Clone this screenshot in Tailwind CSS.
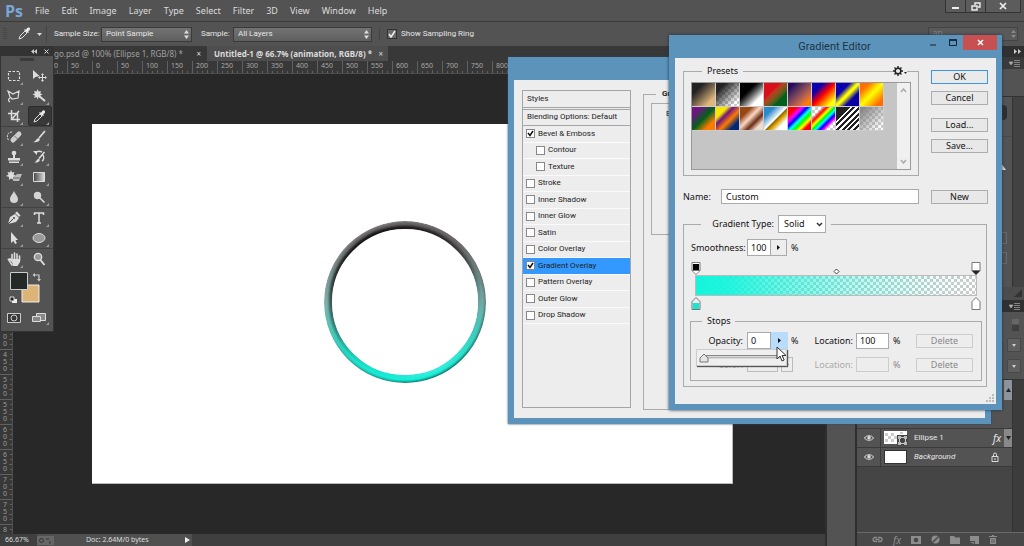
<!DOCTYPE html>
<html lang="en">
<head>
<meta charset="utf-8">
<title>Untitled-1 @ 66.7% (animation, RGB/8)</title>
<script src="https://cdn.jsdelivr.net/npm/@tailwindcss/browser@4"></script>
</head>
<body class="relative flex h-screen flex-col overflow-hidden bg-[#282828] font-['Noto_Sans','Open_Sans',sans-serif] text-[8px] leading-3 text-[#dcdcdc]">

<!-- Menu bar -->
<header class="flex h-[21px] shrink-0 items-center bg-[#535353]">
  <span class="w-[35px] pl-[5px] font-['Open_Sans',sans-serif] text-[16px] leading-5 font-bold text-[#7ba7d7]">Ps</span>
  <nav class="flex flex-1 gap-[12px] text-[9px]">
    <a href="#">File</a><a href="#">Edit</a><a href="#">Image</a><a href="#">Layer</a><a href="#">Type</a><a href="#">Select</a><a href="#">Filter</a><a href="#">3D</a><a href="#">View</a><a href="#">Window</a><a href="#">Help</a>
  </nav>
  <div class="mr-[3px] flex h-[13px] self-start border border-t-0 border-[#333] bg-[#5c5c5c]">
    <button aria-label="Minimize" class="flex w-[20px] items-center justify-center border-r border-[#333]"><svg width="9" height="8"><path d="M1 6h7" stroke="#eee" stroke-width="2"/></svg></button>
    <button aria-label="Restore" class="flex w-[20px] items-center justify-center border-r border-[#333]"><svg width="10" height="9" fill="none" stroke="#eee" stroke-width="1.4"><path d="M1 4h5v4H1zM4 3V1h5v4H7"/></svg></button>
    <button aria-label="Close" class="flex w-[34px] items-center justify-center"><svg width="8" height="8"><path d="M1 1l6 6M7 1L1 7" stroke="#eee" stroke-width="1.7"/></svg></button>
  </div>
</header>

<!-- Tool options -->
<section class="flex h-[25px] shrink-0 items-center border-t border-[#3a3a3a] bg-[#535353] font-['Roboto',sans-serif] text-[#e6e6e6]">
  <svg class="shrink-0" width="47" height="22" viewBox="0 0 47 22"><path d="M4 5v12M6 5v12" stroke="#3d3d3d" stroke-dasharray="1 1"/><path d="M19 16l1-3 5-5 2 2-5 5z" fill="none" stroke="#ddd"/><path d="M24 7l1-1 1 1c1-3 4-3 4-1 0 1-1 2-2 2l1 1-1 1z" fill="#eee"/><path d="M37 10h5l-2.500 3z" fill="#ddd"/><path d="M46.500 3v17" stroke="#444"/></svg>
  <label for="size" class="ml-[7px] w-[47px] whitespace-nowrap">Sample Size:</label>
  <div class="relative"><select id="size" class="h-[15px] w-[91px] appearance-none border border-[#3a3a3a] bg-linear-to-b from-[#737373] to-[#5f5f5f] pl-1 leading-3"><option>Point Sample</option></select>
  <svg class="pointer-events-none absolute top-[3px] right-[3px]" width="5" height="9"><path d="M0 3.500L2.500 0 5 3.500zM0 5.500h5L2.500 9z" fill="#ddd"/></svg></div>
  <label for="sample" class="ml-[9px] w-[32px]">Sample:</label>
  <div class="relative"><select id="sample" class="h-[15px] w-[139px] appearance-none border border-[#3a3a3a] bg-linear-to-b from-[#737373] to-[#5f5f5f] pl-1 leading-3"><option>All Layers</option></select>
  <svg class="pointer-events-none absolute top-[3px] right-[3px]" width="5" height="9"><path d="M0 3.500L2.500 0 5 3.500zM0 5.500h5L2.500 9z" fill="#ddd"/></svg></div>
  <label class="ml-[7px] flex items-center gap-[4px] border-l border-[#444] pl-[7px]">
    <span class="grid size-[10px] border border-[#333] bg-[#6a6a6a]"><input type="checkbox" checked class="peer col-start-1 row-start-1 size-[8px] appearance-none"><svg class="pointer-events-none col-start-1 row-start-1" width="8" height="8"><path d="M1 4l2 3 4-6" fill="none" stroke="#f0f0f0" stroke-width="1.500"/></svg></span>
    Show Sampling Ring</label>
  <div class="relative mr-[6px] ml-auto"><select aria-label="Workspace" class="h-[14px] w-[90px] appearance-none border border-[#444] bg-[#5a5a5a] pl-1 leading-3 text-[#888]"><option>3D</option></select>
  <svg class="pointer-events-none absolute top-[3px] right-[2px]" width="5" height="8"><path d="M0 3L2.500 0 5 3zM0 5h5L2.500 8z" fill="#888"/></svg></div>
</section>

<main class="flex min-h-0 flex-1 bg-[#3c3c3c]">
  <!-- Document window -->
  <section class="flex min-w-0 flex-1 flex-col">
    <div class="flex h-[15px] shrink-0 items-center bg-[#383838] pl-[54px] text-[8px] text-[#a0a0a0]">
      <div class="flex w-[153px] items-center justify-between pr-[6px] whitespace-nowrap"><span>go.psd @ 100% (Ellipse 1, RGB/8) *</span><span class="text-[#ddd]">×</span></div>
      <div class="flex h-full w-[181px] items-center justify-between bg-[#4e4e4e] pr-[5px] pl-[7px] font-bold whitespace-nowrap text-[#dcdcdc]"><span>Untitled-1 @ 66.7% (animation, RGB/8) *</span><span class="font-normal">×</span></div>
    </div>
    <div class="flex h-[13px] shrink-0 overflow-hidden border-b border-[#4c4c4c] bg-[#383838] pl-[17px] text-[7px] leading-[10px] text-[#a8a8a8]" id="hruler"></div>
    <div class="flex min-h-0 flex-1 overflow-hidden bg-[#282828]">
      <div class="flex w-[13px] shrink-0 flex-col overflow-hidden border-r border-[#505050] bg-[#383838] text-[7px] leading-[7px] text-[#9c9c9c]" id="vruler"></div>
      <div class="mt-[50px] ml-[79px] h-[360px] w-[641px] shrink-0 border-r border-b border-[#bbb] bg-white pt-[96px] pl-[231px]">
        <svg width="164" height="166" viewBox="0 0 164 166">
          <defs>
            <linearGradient id="tint" gradientUnits="userSpaceOnUse" x1="0" y1="0" x2="0" y2="164"><stop offset="0" stop-color="#5a5557"/><stop offset=".15" stop-color="#646062"/><stop offset=".5" stop-color="#7aaca6"/><stop offset=".78" stop-color="#2cdcc6"/><stop offset="1" stop-color="#10f5dc"/></linearGradient>
            <linearGradient id="outer" gradientUnits="userSpaceOnUse" x1="40" y1="0" x2="124" y2="164"><stop offset=".05" stop-color="#ddd" stop-opacity=".4"/><stop offset=".4" stop-color="#aaa" stop-opacity=".2"/><stop offset=".6" stop-color="#444" stop-opacity=".35"/><stop offset=".95" stop-color="#022" stop-opacity=".7"/></linearGradient>
            <linearGradient id="inner" gradientUnits="userSpaceOnUse" x1="40" y1="0" x2="124" y2="164"><stop offset=".1" stop-color="#000" stop-opacity=".8"/><stop offset=".5" stop-color="#000" stop-opacity=".3"/><stop offset=".75" stop-color="#0aa" stop-opacity=".1"/><stop offset=".95" stop-color="#8ff" stop-opacity=".5"/></linearGradient>
            <filter id="soft" x="-5%" y="-5%" width="110%" height="110%"><feGaussianBlur stdDeviation="1.1"/></filter>
            <mask id="band"><circle cx="82" cy="82" r="77" fill="none" stroke="#fff" stroke-width="8"/></mask>
          </defs>
          <g fill="none" mask="url(#band)">
            <circle cx="82" cy="82" r="77" stroke="url(#tint)" stroke-width="8"/>
            <g filter="url(#soft)"><circle cx="82" cy="82" r="81" stroke="url(#outer)" stroke-width="3"/><circle cx="82" cy="82" r="74" stroke="url(#inner)" stroke-width="4"/></g>
          </g>
        </svg>
      </div>
    </div>
    <footer class="flex h-[12px] shrink-0 items-center bg-[#3f3f3f] text-[7px] text-[#ddd]">
      <span class="w-[37px] pl-[5px]">66.67%</span>
      <div class="flex h-full w-[155px] items-center bg-[#505050]">
        <svg width="17" height="9"><path d="M0 0h17v9H0z" fill="#666"/><circle cx="4.500" cy="4.500" r="2" fill="none" stroke="#333"/><path d="M9 3h3M13 5v3" stroke="#333"/></svg>
        <span class="ml-[32px] flex-1">Doc: 2.64M/0 bytes</span>
        <svg width="10" height="8"><path d="M3 1l5 3-5 3z" fill="#eee"/></svg>
      </div>
    </footer>
  </section>

  <!-- Collapsed dock -->
  <div class="w-[2px] bg-[#2e2e2e]"></div>
  <div class="w-[28px] border-t-[10px] border-[#383838] bg-[#535353]"></div>
  <div class="w-[2px] bg-[#2e2e2e]"></div>

  <!-- Panels -->
  <aside class="flex w-[167px] flex-col bg-[#424242] font-['Roboto',sans-serif]">
    <div class="flex h-[11px] items-center justify-end bg-[#303030] pr-[3px]"><svg width="7" height="5"><path d="M0 0l3 2.500-3 2.500zM4 0l3 2.500-3 2.500z" fill="#ccc"/></svg></div>
    <div class="flex h-[12px] items-center justify-end bg-[#3a3a3a] pr-[4px]"><svg width="11" height="7"><path d="M0 2h4L2 5zM5 .5h6M5 2.500h6M5 4.500h6M5 6.500h6" fill="#bbb" stroke="#999" stroke-width=".8"/></svg></div>
    <div class="h-[28px] border-b border-[#333] bg-[#535353]"></div>
    <div class="flex h-[190px] bg-[#535353]">
      <div class="flex flex-1 flex-col items-end">
        <span class="mt-[8px] mr-[5px] h-[15px] w-[6px] rounded-r-sm bg-[#2f2f2f]"></span>
        <div class="h-[17px] w-full border-b border-[#484848]"></div>
        <svg class="mt-[26px] mr-[5px]" width="6" height="8"><path d="M0 0l5 7H0z" fill="#ddd"/></svg>
        <span class="mt-[61px] mr-[5px] h-[12px] w-[6px] border border-[#696969]"></span>
        <span class="mt-[8px] mr-[5px] h-[12px] w-[6px] border border-[#696969]"></span>
      </div>
      <div class="w-[12px] border-l border-[#333] bg-[#424242]"></div>
    </div>
    <div class="flex h-[13px] items-end justify-end bg-[#4c4c4c] pr-[2px] pb-[3px]"><svg width="8" height="8"><path d="M8 0v8H0z" fill="#333"/></svg></div>
    <div class="flex h-[12px] items-center justify-end bg-[#303030] pr-[4px]"><svg width="11" height="7"><path d="M0 2h4L2 5zM5 .5h6M5 2.500h6M5 4.500h6M5 6.500h6" fill="#bbb" stroke="#999" stroke-width=".8"/></svg></div>
    <div class="flex h-[67px] flex-col items-end bg-[#535353] pr-[3px]">
      <svg class="mt-[7px] mr-[2px]" width="7" height="12"><path d="M0 0h7v5H0z" fill="#666"/><path d="M0 6h7v6H0z" fill="#3f3f3f"/></svg>
      <svg class="mt-[7px]" width="14" height="14"><path d="M.5.5h13v13H.5z" fill="#5f5f5f" stroke="#484848"/><path d="M5 6h4L7 9z" fill="#ccc"/></svg>
      <svg class="mt-[7px]" width="14" height="14"><path d="M.5.5h13v13H.5z" fill="#5f5f5f" stroke="#484848"/><path d="M5 6h4L7 9z" fill="#ccc"/></svg>
    </div>
    <div class="flex min-h-0 flex-1 border-t border-[#333]">
      <div class="flex w-[155px] flex-col bg-[#454545]">
        <div class="flex h-[48px] shrink-0 justify-end bg-[#535353]"><span class="flex h-[20px] w-[8px] items-center justify-center bg-[#8f949c]"><svg width="5" height="4"><path d="M0 4L2.500 0 5 4z" fill="#222"/></svg></span></div>
        <div class="flex h-[19px] shrink-0 items-center border-t border-[#3a3a3a] bg-[#535353] text-[#e8e8e8]">
          <span class="flex h-full w-[24px] items-center justify-center border-r border-[#3a3a3a]"><svg width="10" height="8"><path d="M.5 4C2 1 8 1 9.500 4 8 7 2 7 .5 4z" fill="none" stroke="#ddd"/><circle cx="5" cy="3.800" r="1.700" fill="#ddd"/></svg></span>
          <svg class="ml-[3px]" width="24" height="15"><rect width="23" height="13" fill="#fff"/><path d="M1 2h3v3H1zM7 2h3v3H7zM4 5h3v3H4zM10 5h3v3h-3zM1 8h3v3H1zM7 8h3v3H7zM16 1h3v2h-3z" fill="#ccc"/><path d="M13 4h11v11H13z" fill="#454545"/><path d="M15.500 6.500h6v6h-6z" fill="none" stroke="#ccc"/><path d="M14 5h3v3h-3zM20 5h3v3h-3zM14 11h3v3h-3zM20 11h3v3h-3z" fill="#bbb"/></svg>
          <span class="ml-[6px] flex-1">Ellipse 1</span>
          <span class="mr-[3px] font-['Noto_Sans',sans-serif] text-[10px] italic">fx</span>
          <span class="flex h-full w-[8px] items-center justify-center bg-[#888]"><svg width="5" height="4"><path d="M0 0h5L2.500 4z" fill="#222"/></svg></span>
        </div>
        <div class="flex h-[20px] shrink-0 items-center border-y border-[#3a3a3a] bg-[#535353] text-[#e8e8e8]">
          <span class="flex h-full w-[24px] items-center justify-center border-r border-[#3a3a3a]"><svg width="10" height="8"><path d="M.5 4C2 1 8 1 9.500 4 8 7 2 7 .5 4z" fill="none" stroke="#ddd"/><circle cx="5" cy="3.800" r="1.700" fill="#ddd"/></svg></span>
          <span class="ml-[3px] h-[14px] w-[23px] border border-[#333] bg-white"></span>
          <span class="ml-[7px] flex-1 italic">Background</span>
          <svg class="mr-[13px]" width="8" height="10"><path d="M1 4.500h6v5H1zM2.500 4V2.500a1.500 1.500 0 013 0V4" fill="none" stroke="#ddd"/><path d="M4 6v2" stroke="#ddd"/></svg>
        </div>
      </div>
      <div class="flex-1 border-l border-[#333] bg-[#3c3c3c]"></div>
    </div>
    <div class="flex h-[14px] shrink-0 items-center gap-[10px] border-t border-[#6a6a6a] bg-[#484848] pl-[15px] text-[#8c8c8c]">
      <svg width="11" height="7" fill="none" stroke="#8c8c8c" stroke-width="1.300"><path d="M5 1.500H3a2 2 0 000 4h2M6 1.500h2a2 2 0 010 4H6M3.500 3.500h4"/></svg>
      <span class="font-['Noto_Sans',sans-serif] text-[10px] italic">fx</span>
      <svg width="10" height="8"><path d="M0 0h10v8H0z" fill="#8c8c8c"/><circle cx="5" cy="4" r="2.300" fill="#484848"/></svg>
      <svg width="9" height="9"><circle cx="4.500" cy="4.500" r="4" fill="#8c8c8c"/><path d="M1.500 7.500l6-6" stroke="#484848" stroke-width="1.500"/></svg>
      <svg width="10" height="8"><path d="M0 0h4l1 1.500h5V8H0z" fill="#8c8c8c"/></svg>
      <svg width="9" height="8"><path d="M0 0h9v8H5V5H0z" fill="#8c8c8c"/><path d="M0 6h4v2z" fill="#8c8c8c"/></svg>
      <svg width="8" height="9"><path d="M0 1.500h8M3 .5h2" stroke="#8c8c8c"/><path d="M1 3h6v6H1z" fill="#8c8c8c"/><path d="M3 4v4M5 4v4" stroke="#484848" stroke-width=".7"/></svg>
    </div>
  </aside>
</main>

<!-- Floating tool palette -->
<section aria-label="Tools" class="absolute top-[46px] left-0 flex w-[54px] flex-col border-r border-b border-l border-[#333] bg-[#535353]">
  <div class="flex h-[10px] items-center justify-end gap-[7px] bg-[#333] pr-[4px]">
    <svg width="6" height="5"><path d="M3 0v5L0 2.500zM6 0v5L3 2.500z" fill="#ccc"/></svg>
    <svg width="5" height="5"><path d="M.5.5l4 4M4.500.5l-4 4" stroke="#ddd"/></svg>
  </div>
  <div class="flex h-[10px] justify-center pt-[2px]"><span class="h-[3px] w-[14px] bg-[#3b3b3b]"></span></div>
  <div class="grid auto-rows-[20px] grid-cols-2 border-b border-[#424242]">
    <button aria-label="Marquee" class="flex items-center justify-center"><svg width="20" height="18" viewBox="0 0 20 18"><path d="M4.500 4.500h11v9h-11z" fill="none" stroke="#ddd" stroke-width="1.200" stroke-dasharray="2.500 1.500"/><path d="M19 15v3h-3z" fill="#999"/></svg></button>
    <button aria-label="Move" class="flex items-center justify-center"><svg width="20" height="18" viewBox="0 0 20 18"><path d="M3 3v9l2.500-2 4-1z" fill="#ddd"/><path d="M12.500 7v7M9 10.500h7" stroke="#ddd"/><path d="M11 8l1.500-2L14 8zM11 13l1.500 2 1.500-2zM10 9l-2 1.500 2 1.500zM15 9l2 1.500-2 1.500z" fill="#ddd"/></svg></button>
    <button aria-label="Lasso" class="flex items-center justify-center"><svg width="20" height="18" viewBox="0 0 20 18"><path d="M4 4l5 3 6-3-1 7-6 1-2-2zM6 11c-2 1-2 3 0 4" fill="none" stroke="#ddd" stroke-width="1.200"/><path d="M19 15v3h-3z" fill="#999"/></svg></button>
    <button aria-label="Magic wand" class="flex items-center justify-center"><svg width="20" height="18" viewBox="0 0 20 18"><path d="M7.500 2l1 2.500L11 4l-.8 2.300L12.500 7.500l-2.300 1 .8 2.500-2.500-1-1 2.500-1-2.500-2.500 1 1-2.500-2.500-1L5 6.300 4 4l2.500.5z" fill="#ddd"/><path d="M9 9l6 5" stroke="#ddd" stroke-width="2"/><path d="M19 15v3h-3z" fill="#999"/></svg></button>
    <button aria-label="Crop" class="flex items-center justify-center"><svg width="20" height="18" viewBox="0 0 20 18"><path d="M7.500 3v9.500H16M4 6.500h9.500V15M8 12l7-8" fill="none" stroke="#ddd" stroke-width="1.500"/><path d="M19 15v3h-3z" fill="#999"/></svg></button>
    <button aria-label="Eyedropper" class="mx-[1px] flex items-center justify-center rounded-xs border border-[#2d2d2d] bg-[#383838]"><svg width="20" height="18" viewBox="0 0 20 18"><path d="M4 15l1-3 5-5 2 2-5 5z" fill="none" stroke="#ddd"/><path d="M9 6l1-1 1 1c1-3 4-4 4-1 0 1-1 2-2 2l1 1-1 1z" fill="#eee"/><path d="M19 15v3h-3z" fill="#999"/></svg></button>
  </div>
  <div class="grid auto-rows-[20px] grid-cols-2 border-b border-[#424242]">
    <button aria-label="Healing brush" class="flex items-center justify-center"><svg width="20" height="18" viewBox="0 0 20 18"><path d="M9 12l6-6" stroke="#ccc" stroke-width="5" stroke-linecap="round"/><path d="M10 7.500l4 4" stroke="#777"/><path d="M8 4c-5 0-6 5-3 9" fill="none" stroke="#ddd" stroke-dasharray="2 1"/><path d="M19 15v3h-3z" fill="#999"/></svg></button>
    <button aria-label="Brush" class="flex items-center justify-center"><svg width="20" height="18" viewBox="0 0 20 18"><path d="M15 3l-6 7" stroke="#ddd" stroke-width="1.700"/><path d="M3 14c3 0 3-4 6-4 2 2 0 5-6 4z" fill="#ddd"/><path d="M19 15v3h-3z" fill="#999"/></svg></button>
    <button aria-label="Clone stamp" class="flex items-center justify-center"><svg width="20" height="18" viewBox="0 0 20 18"><circle cx="10" cy="5" r="2.300" fill="#ddd"/><path d="M9 6h2v4h5v2.500H4V10h5zM5 13.500h10V15H5z" fill="#ddd"/><path d="M19 15v3h-3z" fill="#999"/></svg></button>
    <button aria-label="History brush" class="flex items-center justify-center"><svg width="20" height="18" viewBox="0 0 20 18"><path d="M14.500 4L9 10.500M5 5c2-2 5-2 7-1M12 13c2-1 2-4 1-6" fill="none" stroke="#ddd" stroke-width="1.500"/><path d="M3 3h4v4zM4 14.500c2 0 3-4 5-4 2 2 0 4.500-5 4z" fill="#ddd"/><path d="M19 15v3h-3z" fill="#999"/></svg></button>
    <button aria-label="Background eraser" class="flex items-center justify-center"><svg width="20" height="18" viewBox="0 0 20 18"><path d="M7 2l1 2.500 2.500-.5-1 2.500L12 8l-2.500 1 .5 3-3-1.500L5 12V9L2 8l2.500-1.500-1-2.500 2.500.5z" fill="#ddd"/><path d="M10 9l3-3h5l-3 7H9z" fill="#bbb"/><path d="M9 10h7" stroke="#666"/><path d="M19 15v3h-3z" fill="#999"/></svg></button>
    <button aria-label="Gradient" class="flex items-center justify-center"><svg width="20" height="18" viewBox="0 0 20 18"><defs><linearGradient id="tool"><stop stop-color="#444"/><stop offset="1" stop-color="#ddd"/></linearGradient></defs><path d="M3.500 4.500h11v9h-11z" fill="url(#tool)" stroke="#ddd"/><path d="M19 15v3h-3z" fill="#999"/></svg></button>
    <button aria-label="Blur" class="flex items-center justify-center"><svg width="20" height="18" viewBox="0 0 20 18"><path d="M10 3c1 3 4 5 4 8a4 4 0 01-8 0c0-3 3-5 4-8z" fill="#d4d4d4"/><path d="M19 15v3h-3z" fill="#999"/></svg></button>
    <button aria-label="Dodge" class="flex items-center justify-center"><svg width="20" height="18" viewBox="0 0 20 18"><circle cx="7.500" cy="7.500" r="3.700" fill="#d4d4d4"/><path d="M9.500 9.500l5 5" stroke="#ddd" stroke-width="1.500"/><path d="M19 15v3h-3z" fill="#999"/></svg></button>
  </div>
  <div class="grid auto-rows-[20px] grid-cols-2 border-b border-[#424242]">
    <button aria-label="Pen" class="flex items-center justify-center"><svg width="20" height="18" viewBox="0 0 20 18"><path d="M4 15l2-7 5-3 4 4-3 4z" fill="#ddd"/><path d="M11 4l2-1.500L16.500 6.500 15 8z" fill="#ddd"/><path d="M4 15l5-5" stroke="#444"/><circle cx="10" cy="9" r="1" fill="#444"/><path d="M19 15v3h-3z" fill="#999"/></svg></button>
    <button aria-label="Type" class="flex items-center justify-center"><svg width="20" height="18" viewBox="0 0 20 18"><path d="M4.500 6V4h9v2M9 4v10M7 14h4" fill="none" stroke="#ddd" stroke-width="1.500"/><path d="M19 15v3h-3z" fill="#999"/></svg></button>
    <button aria-label="Path selection" class="flex items-center justify-center"><svg width="20" height="18" viewBox="0 0 20 18"><path d="M7 3v11l2.500-2 1.500 3 1.800-.8-1.300-3.200H14z" fill="#ddd"/><path d="M19 15v3h-3z" fill="#999"/></svg></button>
    <button aria-label="Ellipse" class="flex items-center justify-center"><svg width="20" height="18" viewBox="0 0 20 18"><ellipse cx="9" cy="9" rx="6" ry="4.500" fill="#999" stroke="#ddd"/><path d="M19 15v3h-3z" fill="#999"/></svg></button>
  </div>
  <div class="grid auto-rows-[20px] grid-cols-2">
    <button aria-label="Hand" class="flex items-center justify-center"><svg width="20" height="18" viewBox="0 0 20 18"><path d="M8 15L4.500 9.500 6 9l2 2V9.500M8 10V4.500M10.500 10V3M13 10V4M15.500 11V6" fill="none" stroke="#ddd" stroke-width="1.600" stroke-linecap="round"/><path d="M7.500 9H16v3l-2.500 4H9z" fill="#ddd"/><path d="M19 15v3h-3z" fill="#999"/></svg></button>
    <button aria-label="Zoom" class="flex items-center justify-center"><svg width="20" height="18" viewBox="0 0 20 18"><circle cx="8" cy="7" r="3.700" fill="#999" stroke="#ddd" stroke-width="1.300"/><path d="M10.500 10l4 5" stroke="#ddd" stroke-width="2"/></svg></button>
  </div>
  <svg class="mt-[2px] ml-[6px]" width="38" height="34" viewBox="0 0 38 34"><path d="M15 14h17v17H15z" fill="#ddb477" stroke="#eee"/><path d="M3.500 1.500h17v17h-17z" fill="#252927" stroke="#ccc"/><path d="M28 4h4v5" fill="none" stroke="#ccc" stroke-width="1.200"/><path d="M25.500 4l2.500-2v4zM30 8h4l-2 2.500z" fill="#ccc"/><path d="M5 28h5v4H5z" fill="#eee"/><path d="M3 26h4v4H3z" fill="#222" stroke="#ddd"/></svg>
  <div class="grid h-[26px] grid-cols-2">
    <button aria-label="Quick mask" class="flex items-center justify-center"><svg width="14" height="10"><path d="M.5.5h13v9H.5z" fill="#3a3a3a" stroke="#ccc"/><circle cx="7" cy="5" r="3" fill="none" stroke="#ccc"/></svg></button>
    <button aria-label="Screen mode" class="flex items-center justify-center"><svg width="20" height="16"><path d="M6.500 3.500h9v7h-9z" fill="#888" stroke="#ddd"/><path d="M2.500 6.500h8v5h-8z" fill="#888" stroke="#ddd"/><path d="M19 12v3h-3z" fill="#999"/></svg></button>
  </div>
</section>

<!-- Layer Style dialog -->
<section aria-label="Layer Style" class="absolute top-[57px] left-[508px] h-[367px] w-[483px] bg-[#5b93bb] px-[6px] pt-[23px] pb-[6px] font-['Roboto',sans-serif] text-[8px] leading-[14px] text-[#222] shadow-[0_0_2px_#346]">
  <div class="flex h-full gap-[12px] bg-[#ededed] px-[8px] pt-[10px] pb-[8px]">
    <div class="mb-[2px] flex w-[109px] flex-col border border-[#a5a5a5]">
      <div class="h-[17px] border-b border-[#a5a5a5] pl-[4px] leading-4">Styles</div>
      <div class="mt-[1px] h-[17px] border-y border-[#a5a5a5] pl-[4px]">Blending Options: Default</div>
      <div id="effects" class="grid h-[198px] grid-rows-12"></div>
    </div>
    <fieldset class="flex-1 border border-[#aaa] pl-[7px]">
      <legend class="ml-[5px] px-[6px] text-[8px] leading-[8px] font-bold">Gradient Overlay</legend>
      <fieldset class="mt-[1px] h-[136px] border border-[#aaa] pl-[14px]">
        <legend class="ml-[12px] px-[4px] leading-[8px]">Gradient</legend>
        <span>Blend Mode:</span>
      </fieldset>
    </fieldset>
  </div>
</section>

<!-- Gradient Editor dialog -->
<section aria-label="Gradient Editor" class="absolute top-[35px] left-[669px] flex h-[375px] w-[333px] flex-col bg-[#5b93bb] px-[6px] pb-[6px] font-['Noto_Sans',sans-serif] text-[9px] leading-[14px] text-[#111] shadow-[0_0_3px_#234]">
  <div class="flex h-[23px] shrink-0">
    <h1 class="flex-1 pl-[71px] text-center font-['Roboto',sans-serif] text-[11px] leading-[23px] text-[#1e3444]">Gradient Editor</h1>
    <button aria-label="Minimize" class="flex h-[15px] w-[20px] items-center justify-center"><svg width="8" height="8"><path d="M1 6h6" stroke="#345" stroke-width="1.500"/></svg></button>
    <button aria-label="Maximize" class="flex h-[15px] w-[20px] items-center justify-center"><svg width="8" height="7"><path d="M.5 1h7v5.500h-7z" fill="none" stroke="#123"/><path d="M0 1h8" stroke="#123" stroke-width="1.500"/></svg></button>
    <button aria-label="Close" class="-mr-[1px] flex h-[15px] w-[34px] items-center justify-center bg-[#c75050]"><svg width="7" height="7"><path d="M1 1l5 5M6 1L1 6" stroke="#fff" stroke-width="1.500"/></svg></button>
  </div>
  <div class="flex flex-1 flex-col bg-[#ededed] pt-[6px] pr-[8px] pl-[8px]">
    <div class="flex gap-[12px]">
      <div class="flex flex-1 flex-col">
        <div class="relative">
        <fieldset class="h-[112px] border border-[#aaa] pl-[7px]">
          <legend class="ml-[11px] px-[5px]">Presets</legend>
          <div class="mt-[4px] mr-[7px] flex h-[88px] border border-[#999] bg-[#c5c5c5]">
            <div class="grid flex-1 grid-cols-[repeat(8,24px)] content-start auto-rows-[24px]" id="presets">
              <span class="border-r border-b border-[#ccc] bg-linear-to-br from-[#222] from-25% to-[#e0b67a] to-80%"></span>
              <span class="border-r border-b border-[#ccc] bg-[linear-gradient(135deg,#222_20%,transparent_85%),repeating-conic-gradient(#ccc_0_25%,#fff_0_50%)] bg-[length:auto,6px_6px]"></span>
              <span class="border-r border-b border-[#ccc] bg-linear-to-br from-black from-30% to-white to-75%"></span>
              <span class="border-r border-b border-[#ccc] bg-linear-to-br from-[#d8101c] from-35% to-[#00601c] to-70%"></span>
              <span class="border-r border-b border-[#ccc] bg-linear-to-br from-[#2a0a5c] from-15% to-[#ff7c00] to-85%"></span>
              <span class="border-r border-b border-[#ccc] bg-[linear-gradient(135deg,#0a00b2_25%,#f00_50%,#ff0_85%)]"></span>
              <span class="border-r border-b border-[#ccc] bg-[linear-gradient(135deg,#0a00b2_30%,#ff0_48%,#ff0_52%,#0a00a2_70%)]"></span>
              <span class="border-r border-b border-[#ccc] bg-[linear-gradient(135deg,#ff7000_20%,#ff0_50%,#ff6c00_85%)]"></span>
              <span class="border-r border-b border-[#ccc] bg-[linear-gradient(135deg,#6f1580_20%,#00601b_50%,#fd7c00_78%)]"></span>
              <span class="border-r border-b border-[#ccc] bg-[linear-gradient(135deg,#f9e600_25%,#6f1580_38%,#fd7c00_58%,#002874_80%)]"></span>
              <span class="border-r border-b border-[#ccc] bg-[linear-gradient(135deg,#974616_25%,#fbd8c5_45%,#6c2e16_65%,#efdbcd_82%)]"></span>
              <span class="border-r border-b border-[#ccc] bg-[linear-gradient(135deg,#2989cc_22%,#fff_50%,#906a00_54%,#d99f00_62%,#fff_78%)]"></span>
              <span class="border-r border-b border-[#ccc] bg-[linear-gradient(135deg,#f00_18%,#f0f_32%,#00f_43%,#0ff_53%,#0f0_63%,#ff0_74%,#f00_84%)]"></span>
              <span class="border-r border-b border-[#ccc] bg-[linear-gradient(135deg,transparent_22%,#f00_32%,#ff0_42%,#0f0_50%,#0ff_57%,#00f_66%,#f0f_74%,transparent_80%),repeating-conic-gradient(#ccc_0_25%,#fff_0_50%)] bg-[length:auto,6px_6px]"></span>
              <span class="border-r border-b border-[#ccc] bg-[linear-gradient(135deg,#222_28%,transparent_28%),repeating-linear-gradient(135deg,#222_0_2px,#fff_2px_4px)]"></span>
              <span class="border-r border-b border-[#ccc] bg-[linear-gradient(135deg,#888_10%,transparent_90%),repeating-conic-gradient(#ccc_0_25%,#fff_0_50%)] bg-[length:auto,6px_6px]"></span>
            </div>
            <div class="flex w-[13px] flex-col items-center justify-between bg-[#f0f0f0] py-[5px]">
              <svg width="7" height="5"><path d="M1 4l2.500-3L6 4" fill="none" stroke="#aaa" stroke-width="1.500"/></svg>
              <svg width="7" height="5"><path d="M1 1l2.500 3L6 1" fill="none" stroke="#aaa" stroke-width="1.500"/></svg>
            </div>
          </div>
        </fieldset>
        <button aria-label="Preset menu" class="absolute top-[2px] right-[12px] bg-[#ededed]"><svg width="14" height="10"><circle cx="5" cy="5" r="2.800" fill="none" stroke="#222" stroke-width="1.500"/><path d="M5 0v2M5 8v2M0 5h2M8 5h2M1.500 1.500l1.300 1.300M7.200 7.200l1.300 1.300M1.500 8.500l1.300-1.300M7.200 2.800l1.300-1.300" stroke="#222" stroke-width="1.400"/><path d="M11 6h3l-1.500 2z" fill="#222"/></svg></button>
        </div>
        <div class="mt-[13px] flex items-center"><label for="name" class="w-[38px]">Name:</label><input id="name" value="Custom" class="h-[15px] min-w-0 flex-1 border border-[#aaa] bg-white pl-[4px]"></div>
      </div>
      <div class="flex w-[57px] flex-col pt-[6px] text-center leading-[12px]">
        <button class="h-[14px] border border-[#3c94e8] bg-[#eaeaea]">OK</button>
        <button class="mt-[7px] h-[14px] border border-[#adadad] bg-[#e8e8e8]">Cancel</button>
        <button class="mt-[13px] h-[14px] border border-[#adadad] bg-[#e8e8e8]">Load...</button>
        <button class="mt-[7px] h-[14px] border border-[#adadad] bg-[#e8e8e8]">Save...</button>
        <button class="mt-[37px] h-[14px] border border-[#adadad] bg-[#e8e8e8]">New</button>
      </div>
    </div>

    <fieldset class="mt-[11px] mr-[1px] h-[172px] border border-[#aaa] pr-[4px] pl-[6px]">
      <legend class="ml-[11px] flex items-center gap-[4px] pr-[5px] pl-[11px]">
        <label for="type" class="w-[62px] text-right whitespace-nowrap">Gradient Type:</label>
        <span class="relative"><select id="type" class="block h-[18px] w-[48px] appearance-none border border-[#aaa] bg-white pl-[5px] leading-4"><option>Solid</option></select><svg class="pointer-events-none absolute top-[7px] right-[3px]" width="7" height="5"><path d="M1 1l2.500 2.500L6 1" fill="none" stroke="#333" stroke-width="1.500"/></svg></span>
      </legend>
      <div class="mt-[6px] flex items-center pl-[1px]">
        <label for="smooth" class="w-[56px] whitespace-nowrap">Smoothness:</label>
        <input id="smooth" value="100" class="h-[17px] w-[24px] border border-[#aaa] bg-white pl-[3px]">
        <button aria-label="Smoothness slider" class="-ml-[1px] flex h-[17px] w-[17px] items-center justify-center border border-[#aaa]"><svg width="3" height="5"><path d="M0 0l3 2.500L0 5z" fill="#111"/></svg></button>
        <span class="ml-[4px]">%</span>
      </div>
      <div class="mx-[1px] mt-[6px]">
        <div class="flex items-end justify-between">
          <svg width="10" height="13"><path d="M1 8.500h8L5 12.500z" fill="#fff" stroke="#888"/><path d="M1 .5h8v8H1z" fill="#fff" stroke="#777"/><path d="M2 2h6v6H2z"/></svg>
          <svg width="7" height="7"><path d="M3.500 1L6 3.500 3.500 6 1 3.500z" fill="#fff" stroke="#444"/></svg>
          <svg width="10" height="13"><path d="M1 8.500h8L5 12.500z" fill="#222" stroke="#222"/><path d="M1 .5h8v8H1z" fill="#fff" stroke="#777"/></svg>
        </div>
        <div class="mx-[4px] h-[21px] border border-[#bbb] bg-[linear-gradient(90deg,#14f5dc,#14f5dcee_12%,#14f5dc99_33%,#14f5dc55_55%,#14f5dc11_85%,transparent),repeating-conic-gradient(#ccc_0_25%,#fff_0_50%)] bg-[length:auto,6px_6px]"></div>
        <div class="mt-[1px] flex justify-between">
          <svg width="10" height="13"><path d="M1 4.500L5 .5l4 4v8H1z" fill="#eee" stroke="#777"/><path d="M2 6h6v6H2z" fill="#14e8d2"/></svg>
          <svg width="10" height="13"><path d="M1 4.500L5 .5l4 4v8H1z" fill="#fff" stroke="#777"/></svg>
        </div>
      </div>
      <div class="relative">
      <fieldset class="mt-[4px] h-[67px] border border-[#aaa]">
        <legend class="ml-[11px] px-[5px]">Stops</legend>
        <div class="mt-[4px] grid grid-cols-[56px_41px_24px_44px_33px_27px_57px] items-center gap-y-[8px]">
          <label for="opacity" class="pr-[4px] text-right">Opacity:</label>
          <span class="flex"><input id="opacity" value="0" class="h-[17px] w-[24px] border border-[#aaa] bg-white pl-[3px]"><button aria-label="Opacity slider" class="flex h-[17px] w-[17px] items-center justify-center bg-[#b9dcfa]"><svg width="3" height="5"><path d="M0 0l3 2.500L0 5z" fill="#111"/></svg></button></span>
          <span class="pl-[3px]">%</span>
          <label for="loc1" class="pr-[3px] text-right whitespace-nowrap">Location:</label>
          <input id="loc1" value="100" class="h-[16px] w-full border border-[#aaa] bg-white pl-[3px]">
          <span class="pl-[4px]">%</span>
          <button disabled class="h-[14px] border border-[#ccc] text-center leading-[12px] text-[#888]">Delete</button>
          <span class="pr-[4px] text-right text-[#aaa]">Color:</span>
          <span class="flex items-center gap-[3px]"><span class="h-[15px] w-[31px] shrink-0 border border-[#bbb]"></span><span class="flex h-[15px] w-[12px] shrink-0 items-center justify-center border border-[#bbb]"><svg width="3" height="5"><path d="M0 0l3 2.500L0 5z" fill="#888"/></svg></span></span>
          <span></span>
          <label for="loc2" class="pr-[3px] text-right whitespace-nowrap text-[#aaa]">Location:</label>
          <input id="loc2" disabled class="h-[15px] w-full border border-[#ccc]">
          <span class="pl-[4px] text-[#888]">%</span>
          <button disabled class="h-[14px] border border-[#ccc] text-center leading-[12px] text-[#888]">Delete</button>
        </div>
      </fieldset>
      <!-- Opacity slider popup and pointer -->
      <div class="absolute top-[35px] left-[6px] h-[17px] w-[91px] border border-[#ccc] bg-[#efefef] pt-[2px] pl-[2px] shadow-[1px_1px_1px_#555]">
        <svg width="85" height="12"><path d="M5 3.500h80" stroke="#888"/><path d="M5 5.500h80" stroke="#bbb" stroke-width="2"/><path d="M1 10V6l4-4 4 4v4z" fill="#e4e4e4" stroke="#777"/></svg>
      </div>
      <svg class="absolute top-[32px] left-[86px]" width="11" height="16" viewBox="0 0 11 16"><path d="M1 1v12l3-3 2 5 2.200-1L6 9.500h4z" fill="#fff" stroke="#333"/></svg>
      </div>
    </fieldset>
    <svg class="mt-auto -mr-[7px] mb-[1px] self-end" width="9" height="9"><path d="M6 0h2v2H6zM6 3h2v2H6zM3 3h2v2H3zM6 6h2v2H6zM3 6h2v2H3zM0 6h2v2H0z" fill="#bbb"/></svg>
  </div>
</section>

<script>
const ticks = ['', '100', '50', '0', '50', '100', '150', '200', '250', '300', '350', '400', '450', '500', '550', '600', '650', '700', '750', '800'];
document.getElementById('hruler').innerHTML = ticks.map(t => `<span class="relative h-full w-[25px] shrink-0 border-l border-[#606060] pl-[3px]">${t}<svg class="absolute bottom-0 left-0" width="25" height="3"><path d="M4.500 1v2M9.500 1v2M14.500 0v3M19.500 1v2" stroke="#606060"/></svg></span>`).join('');
// The last label has room for its first digit only.
const rows = ['100', '50', '0', '50', '100', '150', '200', '250', '300', '350', '400', '450', '500', '550', '600', '650', '700', '750', '8'];
document.getElementById('vruler').innerHTML = rows.map(t => `<span class="relative flex h-[25px] shrink-0 flex-col border-t border-[#606060] pt-[1px] pl-[3px]">${[...t].map(d => `<span>${d}</span>`).join('')}<svg class="absolute top-0 right-0" width="3" height="25"><path d="M1 4.500h2M1 9.500h2M0 14.500h3M1 19.500h2" stroke="#606060"/></svg></span>`).join('');
const effects = [['Bevel & Emboss', 1], ['Contour', 0, 1], ['Texture', 0, 1], ['Stroke'], ['Inner Shadow'], ['Inner Glow'], ['Satin'], ['Color Overlay'], ['Gradient Overlay', 1], ['Pattern Overlay'], ['Outer Glow'], ['Drop Shadow']];
document.getElementById('effects').innerHTML = effects.map(([n, on, sub]) => `<label class="flex items-center border-b border-[#fafafa] ${sub ? 'pl-[13px]' : 'pl-[3px]'} ${n === 'Gradient Overlay' ? 'bg-[#3399ff]' : ''}"><span class="mr-[3px] grid size-[9px] border border-[#888] bg-white"><input type="checkbox" ${on ? 'checked' : ''} class="col-start-1 row-start-1 size-[7px] appearance-none">${on ? '<svg class="pointer-events-none col-start-1 row-start-1" width="7" height="7"><path d="M1 3l2 2.500L6 1" fill="none" stroke="#111" stroke-width="1.500"/></svg>' : ''}</span>${n.replace('&', '&amp;')}</label>`).join('');
</script>
</body>
</html>
